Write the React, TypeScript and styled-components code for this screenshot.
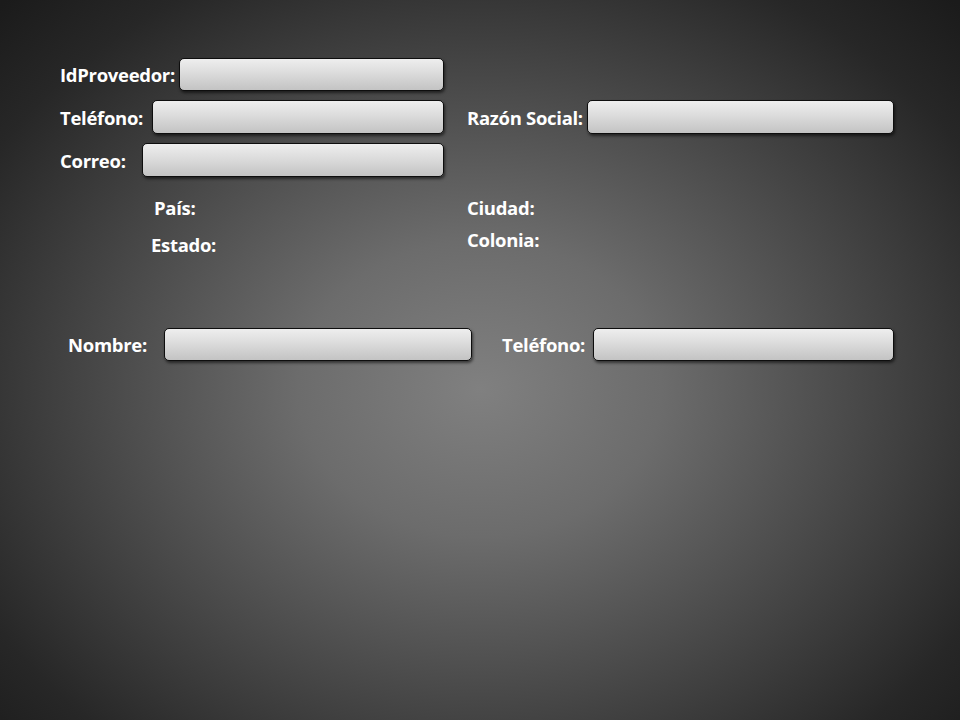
import React from "react";
import styled, { createGlobalStyle } from "styled-components";

const Global = createGlobalStyle`
  html, body { margin: 0; padding: 0; }
  body { background: #1e1e1e; }
`;

const Page = styled.div`
  width: 960px;
  height: 720px;
  box-sizing: border-box;
  padding: 58px 0 0 60px;
  background: radial-gradient(ellipse 70% 76% at 50% 54%, #808080 0%, #6c6c6c 27%, #444444 60%, #272727 84%, #1b1b1b 100%);
  font-family: "Open Sans", "Noto Sans", sans-serif;
  font-weight: 700;
  font-size: 18.5px;
  color: #ffffff;
  overflow: hidden;
`;

const Row = styled.div<{ $top?: number; $h?: number }>`
  display: flex;
  align-items: center;
  height: ${(p) => p.$h ?? 34}px;
  margin-top: ${(p) => p.$top ?? 0}px;
`;

const Group = styled.div<{ $indent?: number; $w?: number }>`
  display: flex;
  align-items: center;
  margin-left: ${(p) => p.$indent ?? 0}px;
  width: ${(p) => (p.$w ? `${p.$w}px` : "auto")};
  flex: none;
`;

const Label = styled.span<{ $w?: number }>`
  display: inline-block;
  width: ${(p) => (p.$w ? `${p.$w}px` : "auto")};
  white-space: nowrap;
  letter-spacing: -0.3px;
`;

const Input = styled.div<{ $w: number; $h?: number }>`
  width: ${(p) => p.$w}px;
  height: ${(p) => p.$h ?? 33}px;
  box-sizing: border-box;
  border: 1px solid #0e0e0e;
  border-radius: 5px;
  background: linear-gradient(to bottom, #eeeeee 0%, #dcdcdc 45%, #c3c3c3 100%);
  box-shadow: 1px 2px 3px rgba(0, 0, 0, 0.55);
`;

const Columns = styled.div`
  display: flex;
  margin-top: 20px;
`;

const Column = styled.div<{ $indent: number; $w?: number }>`
  display: flex;
  flex-direction: column;
  margin-left: ${(p) => p.$indent}px;
  width: ${(p) => (p.$w ? `${p.$w}px` : "auto")};
`;

const Caption = styled.span<{ $indent?: number; $top?: number }>`
  display: block;
  height: 22px;
  line-height: 22px;
  margin-left: ${(p) => p.$indent ?? 0}px;
  margin-top: ${(p) => p.$top ?? 0}px;
  white-space: nowrap;
  letter-spacing: -0.3px;
`;

export default function App() {
  return (
    <>
      <Global />
      <Page>
        <Row $h={33}>
          <Group>
            <Label $w={119}>IdProveedor:</Label>
            <Input $w={265} />
          </Group>
        </Row>
        <Row $top={9}>
          <Group $w={407}>
            <Label $w={92}>Teléfono:</Label>
            <Input $w={292} $h={34} />
          </Group>
          <Group>
            <Label $w={120}>Razón Social:</Label>
            <Input $w={307} $h={34} />
          </Group>
        </Row>
        <Row $top={9}>
          <Group>
            <Label $w={82}>Correo:</Label>
            <Input $w={302} $h={34} />
          </Group>
        </Row>
        <Columns>
          <Column $indent={91} $w={316}>
            <Caption $indent={3}>País:</Caption>
            <Caption $top={15}>Estado:</Caption>
          </Column>
          <Column $indent={0}>
            <Caption>Ciudad:</Caption>
            <Caption $top={10}>Colonia:</Caption>
          </Column>
        </Columns>
        <Row $top={72} $h={33}>
          <Group $indent={8} $w={434}>
            <Label $w={96}>Nombre:</Label>
            <Input $w={308} />
          </Group>
          <Group>
            <Label $w={91}>Teléfono:</Label>
            <Input $w={301} />
          </Group>
        </Row>
      </Page>
    </>
  );
}
